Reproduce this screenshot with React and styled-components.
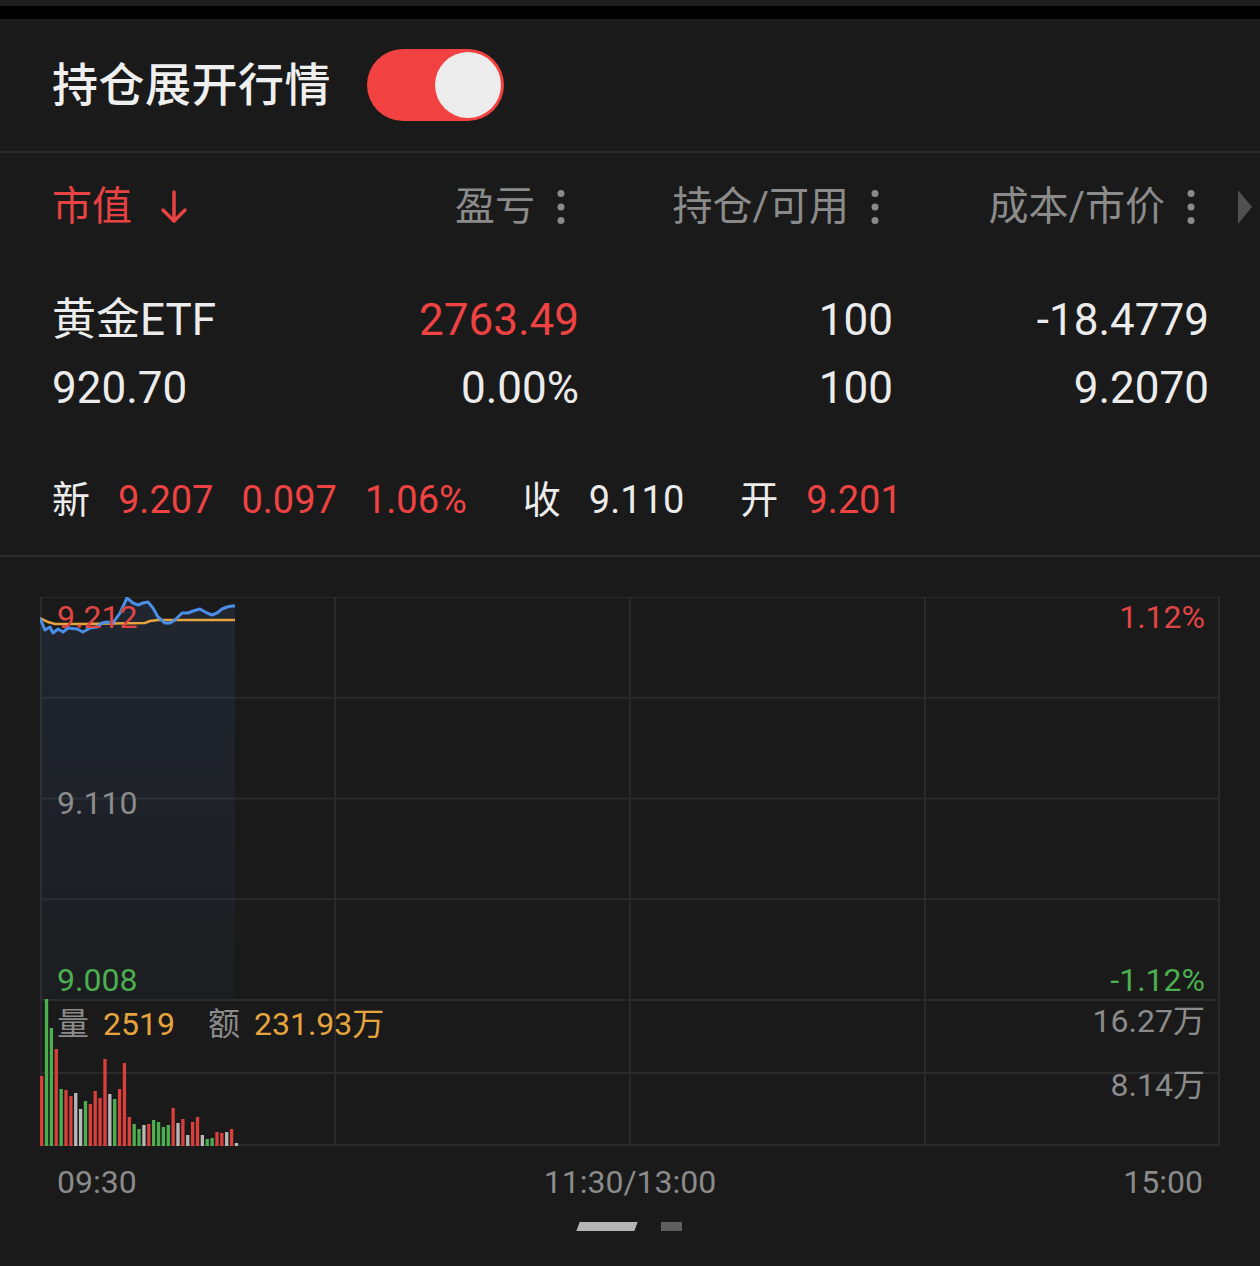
import styled, { createGlobalStyle } from "styled-components";

const GlobalStyle = createGlobalStyle`
  * { box-sizing: border-box; }
  body {
    margin: 0;
    background: #1a1a1a;
    font-family: Roboto, "Noto Sans CJK SC", sans-serif;
  }
`;

const RED = "#ef4343";
const GREEN = "#4caf50";
const ORANGE = "#e6a43e";
const GRAY = "#8b8b8b";
const WHITE = "#ececec";

const pricePoints = [
  [0, 21], [5, 33], [10, 30], [13, 36], [18, 32], [23, 35], [28, 31], [37, 32],
  [43, 35], [50, 31], [57, 30], [62, 26], [67, 25], [73, 26], [80, 16], [87, 1],
  [93, 6], [98, 8], [103, 6], [108, 5], [113, 11], [118, 20], [125, 26], [130, 26],
  [135, 23], [142, 16], [148, 16], [153, 14], [160, 12], [167, 16], [172, 18],
  [177, 16], [182, 12], [187, 10], [192, 9], [195, 9],
];

const avgPoints = [
  [0, 21], [8, 25], [15, 27], [40, 27], [105, 26], [110, 24], [118, 23], [195, 23],
];

const volumes = [
  [70, "r"], [147, "g"], [118, "g"], [97, "r"], [57, "g"], [56, "r"], [50, "r"],
  [53, "w"], [37, "w"], [45, "g"], [42, "r"], [55, "r"], [48, "r"], [87, "r"],
  [52, "w"], [47, "g"], [57, "r"], [83, "r"], [29, "r"], [22, "g"], [17, "g"],
  [21, "w"], [22, "r"], [26, "g"], [24, "g"], [19, "g"], [21, "g"], [38, "r"],
  [23, "w"], [27, "r"], [11, "w"], [24, "r"], [29, "r"], [11, "w"], [7, "g"],
  [8, "g"], [14, "r"], [13, "r"], [14, "w"], [17, "r"], [3, "w"],
];

const barColor = { r: "#d9403c", g: "#4caf50", w: "#b8b8b8" };

const Page = styled.div`
  width: 1260px;
  height: 1266px;
  background: #1a1a1a;
  overflow: hidden;
  color: ${WHITE};
`;

const TopStrip = styled.div`
  height: 19px;
  border-top: 6px solid #1f1f1f;
  background: #000;
`;

const Header = styled.header`
  height: 134px;
  display: flex;
  align-items: center;
  gap: 36px;
  padding-left: 52px;
  border-bottom: 2px solid #2b2b2b;
`;

const Title = styled.h1`
  margin: 0;
  font-size: 46px;
  font-weight: 500;
  line-height: 1;
  letter-spacing: 0.5px;
  color: #efefef;
`;

const Toggle = styled.div`
  width: 137px;
  height: 72px;
  padding: 3px;
  border-radius: 36px;
  background: #f24141;
  display: flex;
  justify-content: flex-end;
`;

const Knob = styled.span`
  width: 66px;
  height: 66px;
  border-radius: 50%;
  background: #ececec;
`;

const ColumnHead = styled.div`
  position: relative;
  height: 108px;
  display: grid;
  grid-template-columns: 230px 297px 314px 316px;
  align-items: center;
  padding: 0 52px;
  font-size: 40px;
  line-height: 1;
`;

const HeadCell = styled.div`
  display: flex;
  align-items: center;
  justify-content: ${(p) => (p.$first ? "flex-start" : "flex-end")};
  gap: ${(p) => (p.$first ? "28px" : "22px")};
  padding-right: ${(p) => (p.$first ? "0" : "14px")};
  color: ${(p) => (p.$active ? "#e84343" : GRAY)};
`;

const ScrollHint = styled.span`
  position: absolute;
  right: 8px;
  top: 50%;
  transform: translateY(-50%);
  border-left: 14px solid #505050;
  border-top: 17px solid transparent;
  border-bottom: 17px solid transparent;
`;

const Rows = styled.div`
  padding-top: 25px;
`;

const DataRow = styled.div`
  height: 68px;
  display: grid;
  grid-template-columns: 230px 297px 314px 316px;
  align-items: center;
  padding: 0 52px;
  font-size: 44px;
  line-height: 1;
`;

const Cell = styled.div`
  text-align: ${(p) => (p.$first ? "left" : "right")};
  color: ${(p) => (p.$red ? RED : WHITE)};
  white-space: nowrap;
`;

const QuoteRow = styled.div`
  display: flex;
  align-items: center;
  gap: 56px;
  padding: 50px 52px 27px;
  height: 135px;
  font-size: 38px;
  line-height: 56px;
  border-bottom: 2px solid #2b2b2b;
`;

const QuoteGroup = styled.div`
  display: flex;
  gap: 28px;
`;

const QuoteValue = styled.span`
  color: ${(p) => (p.$red ? RED : WHITE)};
`;

const ChartSection = styled.section`
  padding: 40px 40px 0;
`;

const ChartCanvas = styled.div`
  position: relative;
  width: 1180px;
  height: 549px;

  svg {
    display: block;
  }
`;

const AxisLabel = styled.span`
  position: absolute;
  top: ${(p) => p.$top}px;
  ${(p) => (p.$right ? "right: 15px;" : "left: 17px;")}
  font-size: 32px;
  line-height: 32px;
  color: ${(p) => p.$color || GRAY};
  white-space: nowrap;
`;

const VolumeInfo = styled.div`
  position: absolute;
  left: 17px;
  top: 411px;
  display: flex;
  font-size: 32px;
  line-height: 32px;
  color: ${GRAY};

  b {
    font-weight: 400;
    color: ${ORANGE};
    margin: 0 33px 0 14px;
  }
`;

const TimeAxis = styled.div`
  height: 72px;
  display: flex;
  justify-content: space-between;
  align-items: center;
  padding: 0 17px;
  font-size: 32px;
  color: ${GRAY};
`;

const Pager = styled.div`
  display: flex;
  justify-content: center;
  gap: 25px;
  margin-top: 4px;
`;

const PagerDot = styled.span`
  width: ${(p) => (p.$active ? "58px" : "21px")};
  height: 9px;
  background: ${(p) => (p.$active ? "#b4b4b4" : "#5e5e5e")};
  transform: ${(p) => (p.$active ? "skewX(-20deg)" : "none")};
`;

function Dots() {
  return (
    <svg width="8" height="36" viewBox="0 0 8 36">
      <circle cx="4" cy="4.5" r="3.5" fill="#8a8a8a" />
      <circle cx="4" cy="18" r="3.5" fill="#8a8a8a" />
      <circle cx="4" cy="31.5" r="3.5" fill="#8a8a8a" />
    </svg>
  );
}

function DownArrow() {
  return (
    <svg width="28" height="34" viewBox="0 0 28 34" fill="none" stroke="#e84343" strokeWidth="3.5" strokeLinecap="round" strokeLinejoin="round">
      <path d="M14 2v29" />
      <path d="M3 20l11 11 11-11" />
    </svg>
  );
}

function Chart() {
  const w = 1180;
  const priceH = 403;
  const h = 549;
  const rows = [0, 100.75, 201.5, 302.25, priceH, 476, h - 1];
  const cols = [1, 295, 590, 885, w - 1];
  const line = pricePoints.map(([x, y]) => `${x},${y}`).join(" ");
  const avg = avgPoints.map(([x, y]) => `${x},${y}`).join(" ");
  const area = `0,${priceH} ${line} 195,${priceH}`;

  return (
    <svg width={w} height={h} viewBox={`0 0 ${w} ${h}`}>
      <defs>
        <linearGradient id="shade" x1="0" y1="0" x2="0" y2="1">
          <stop offset="0" stopColor="#4a6fb8" stopOpacity="0.14" />
          <stop offset="1" stopColor="#4a6fb8" stopOpacity="0.04" />
        </linearGradient>
      </defs>
      {rows.map((y) => (
        <line key={`r${y}`} x1="0" x2={w} y1={y} y2={y} stroke="#2a2a2a" strokeWidth="2" />
      ))}
      {cols.map((x) => (
        <line key={`c${x}`} x1={x} x2={x} y1="0" y2={h} stroke="#2a2a2a" strokeWidth="2" />
      ))}
      <polygon points={area} fill="url(#shade)" />
      <polyline points={avg} fill="none" stroke="#e6a43e" strokeWidth="2.5" />
      <polyline points={line} fill="none" stroke="#4a8ee6" strokeWidth="3" strokeLinejoin="round" />
      {volumes.map(([v, c], i) => (
        <rect key={i} x={i * 4.87} y={h - v} width="3.3" height={v} fill={barColor[c]} />
      ))}
    </svg>
  );
}

export default function App() {
  return (
    <Page>
      <GlobalStyle />
      <TopStrip />
      <Header>
        <Title>持仓展开行情</Title>
        <Toggle>
          <Knob />
        </Toggle>
      </Header>

      <ColumnHead>
        <HeadCell $first $active>
          市值 <DownArrow />
        </HeadCell>
        <HeadCell>
          盈亏 <Dots />
        </HeadCell>
        <HeadCell>
          持仓/可用 <Dots />
        </HeadCell>
        <HeadCell>
          成本/市价 <Dots />
        </HeadCell>
        <ScrollHint />
      </ColumnHead>

      <Rows>
        <DataRow>
          <Cell $first>黄金ETF</Cell>
          <Cell $red>2763.49</Cell>
          <Cell>100</Cell>
          <Cell>-18.4779</Cell>
        </DataRow>
        <DataRow>
          <Cell $first>920.70</Cell>
          <Cell>0.00%</Cell>
          <Cell>100</Cell>
          <Cell>9.2070</Cell>
        </DataRow>
      </Rows>

      <QuoteRow>
        <QuoteGroup>
          <span>新</span>
          <QuoteValue $red>9.207</QuoteValue>
          <QuoteValue $red>0.097</QuoteValue>
          <QuoteValue $red>1.06%</QuoteValue>
        </QuoteGroup>
        <QuoteGroup>
          <span>收</span>
          <QuoteValue>9.110</QuoteValue>
        </QuoteGroup>
        <QuoteGroup>
          <span>开</span>
          <QuoteValue $red>9.201</QuoteValue>
        </QuoteGroup>
      </QuoteRow>

      <ChartSection>
        <ChartCanvas>
          <Chart />
          <AxisLabel $top={4} $color="#e04545">9.212</AxisLabel>
          <AxisLabel $top={4} $right $color="#e04545">1.12%</AxisLabel>
          <AxisLabel $top={190}>9.110</AxisLabel>
          <AxisLabel $top={367} $color={GREEN}>9.008</AxisLabel>
          <AxisLabel $top={367} $right $color={GREEN}>-1.12%</AxisLabel>
          <VolumeInfo>
            量<b>2519</b>额<b>231.93万</b>
          </VolumeInfo>
          <AxisLabel $top={408} $right>16.27万</AxisLabel>
          <AxisLabel $top={472} $right>8.14万</AxisLabel>
        </ChartCanvas>
        <TimeAxis>
          <span>09:30</span>
          <span>11:30/13:00</span>
          <span>15:00</span>
        </TimeAxis>
      </ChartSection>

      <Pager>
        <PagerDot $active />
        <PagerDot />
      </Pager>
    </Page>
  );
}
